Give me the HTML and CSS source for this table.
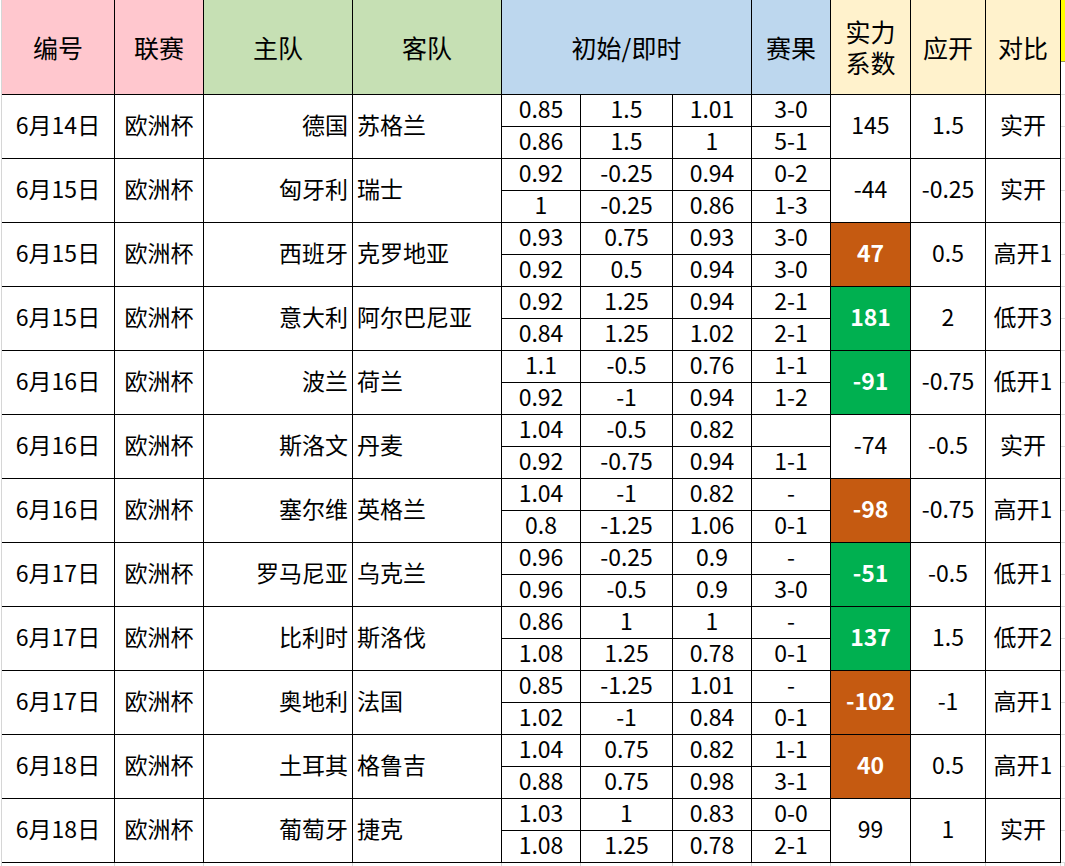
FILE: index.html
```html
<!DOCTYPE html>
<html lang="zh-CN">
<head>
<meta charset="utf-8">
<title>欧洲杯</title>
<link rel="stylesheet" href="styles.css">
</head>
<body>
<div class="sheet">
  <div class="c h pink">编号</div>
  <div class="c h pink">联赛</div>
  <div class="c h lgreen">主队</div>
  <div class="c h lgreen">客队</div>
  <div class="c h blue span3">初始/即时</div>
  <div class="c h blue">赛果</div>
  <div class="c h yellow two"><span class="ln">实力</span><span class="ln">系数</span></div>
  <div class="c h yellow">应开</div>
  <div class="c h yellow">对比</div>
  <div class="edge edge-h"></div>

  <div class="c s2">6月14日</div><div class="c s2">欧洲杯</div><div class="c s2 r">德国</div><div class="c s2 l">苏格兰</div>
  <div class="c">0.85</div><div class="c">1.5</div><div class="c">1.01</div><div class="c">3-0</div>
  <div class="c s2">145</div><div class="c s2">1.5</div><div class="c s2">实开</div><div class="edge"></div>
  <div class="c">0.86</div><div class="c">1.5</div><div class="c">1</div><div class="c">5-1</div><div class="edge"></div>

  <div class="c s2">6月15日</div><div class="c s2">欧洲杯</div><div class="c s2 r">匈牙利</div><div class="c s2 l">瑞士</div>
  <div class="c">0.92</div><div class="c">-0.25</div><div class="c">0.94</div><div class="c">0-2</div>
  <div class="c s2">-44</div><div class="c s2">-0.25</div><div class="c s2">实开</div><div class="edge"></div>
  <div class="c">1</div><div class="c">-0.25</div><div class="c">0.86</div><div class="c">1-3</div><div class="edge"></div>

  <div class="c s2">6月15日</div><div class="c s2">欧洲杯</div><div class="c s2 r">西班牙</div><div class="c s2 l">克罗地亚</div>
  <div class="c">0.93</div><div class="c">0.75</div><div class="c">0.93</div><div class="c">3-0</div>
  <div class="c s2 up">47</div><div class="c s2">0.5</div><div class="c s2">高开1</div><div class="edge"></div>
  <div class="c">0.92</div><div class="c">0.5</div><div class="c">0.94</div><div class="c">3-0</div><div class="edge"></div>

  <div class="c s2">6月15日</div><div class="c s2">欧洲杯</div><div class="c s2 r">意大利</div><div class="c s2 l">阿尔巴尼亚</div>
  <div class="c">0.92</div><div class="c">1.25</div><div class="c">0.94</div><div class="c">2-1</div>
  <div class="c s2 down">181</div><div class="c s2">2</div><div class="c s2">低开3</div><div class="edge"></div>
  <div class="c">0.84</div><div class="c">1.25</div><div class="c">1.02</div><div class="c">2-1</div><div class="edge"></div>

  <div class="c s2">6月16日</div><div class="c s2">欧洲杯</div><div class="c s2 r">波兰</div><div class="c s2 l">荷兰</div>
  <div class="c">1.1</div><div class="c">-0.5</div><div class="c">0.76</div><div class="c">1-1</div>
  <div class="c s2 down">-91</div><div class="c s2">-0.75</div><div class="c s2">低开1</div><div class="edge"></div>
  <div class="c">0.92</div><div class="c">-1</div><div class="c">0.94</div><div class="c">1-2</div><div class="edge"></div>

  <div class="c s2">6月16日</div><div class="c s2">欧洲杯</div><div class="c s2 r">斯洛文</div><div class="c s2 l">丹麦</div>
  <div class="c">1.04</div><div class="c">-0.5</div><div class="c">0.82</div><div class="c"></div>
  <div class="c s2">-74</div><div class="c s2">-0.5</div><div class="c s2">实开</div><div class="edge"></div>
  <div class="c">0.92</div><div class="c">-0.75</div><div class="c">0.94</div><div class="c">1-1</div><div class="edge"></div>

  <div class="c s2">6月16日</div><div class="c s2">欧洲杯</div><div class="c s2 r">塞尔维</div><div class="c s2 l">英格兰</div>
  <div class="c">1.04</div><div class="c">-1</div><div class="c">0.82</div><div class="c">-</div>
  <div class="c s2 up">-98</div><div class="c s2">-0.75</div><div class="c s2">高开1</div><div class="edge"></div>
  <div class="c">0.8</div><div class="c">-1.25</div><div class="c">1.06</div><div class="c">0-1</div><div class="edge"></div>

  <div class="c s2">6月17日</div><div class="c s2">欧洲杯</div><div class="c s2 r">罗马尼亚</div><div class="c s2 l">乌克兰</div>
  <div class="c">0.96</div><div class="c">-0.25</div><div class="c">0.9</div><div class="c">-</div>
  <div class="c s2 down">-51</div><div class="c s2">-0.5</div><div class="c s2">低开1</div><div class="edge"></div>
  <div class="c">0.96</div><div class="c">-0.5</div><div class="c">0.9</div><div class="c">3-0</div><div class="edge"></div>

  <div class="c s2">6月17日</div><div class="c s2">欧洲杯</div><div class="c s2 r">比利时</div><div class="c s2 l">斯洛伐</div>
  <div class="c">0.86</div><div class="c">1</div><div class="c">1</div><div class="c">-</div>
  <div class="c s2 down">137</div><div class="c s2">1.5</div><div class="c s2">低开2</div><div class="edge"></div>
  <div class="c">1.08</div><div class="c">1.25</div><div class="c">0.78</div><div class="c">0-1</div><div class="edge"></div>

  <div class="c s2">6月17日</div><div class="c s2">欧洲杯</div><div class="c s2 r">奥地利</div><div class="c s2 l">法国</div>
  <div class="c">0.85</div><div class="c">-1.25</div><div class="c">1.01</div><div class="c">-</div>
  <div class="c s2 up">-102</div><div class="c s2">-1</div><div class="c s2">高开1</div><div class="edge"></div>
  <div class="c">1.02</div><div class="c">-1</div><div class="c">0.84</div><div class="c">0-1</div><div class="edge"></div>

  <div class="c s2">6月18日</div><div class="c s2">欧洲杯</div><div class="c s2 r">土耳其</div><div class="c s2 l">格鲁吉</div>
  <div class="c">1.04</div><div class="c">0.75</div><div class="c">0.82</div><div class="c">1-1</div>
  <div class="c s2 up">40</div><div class="c s2">0.5</div><div class="c s2">高开1</div><div class="edge"></div>
  <div class="c">0.88</div><div class="c">0.75</div><div class="c">0.98</div><div class="c">3-1</div><div class="edge"></div>

  <div class="c s2">6月18日</div><div class="c s2">欧洲杯</div><div class="c s2 r">葡萄牙</div><div class="c s2 l">捷克</div>
  <div class="c">1.03</div><div class="c">1</div><div class="c">0.83</div><div class="c">0-0</div>
  <div class="c s2">99</div><div class="c s2">1</div><div class="c s2">实开</div><div class="edge"></div>
  <div class="c">1.08</div><div class="c">1.25</div><div class="c">0.78</div><div class="c">2-1</div><div class="edge"></div>

  <div class="fill"></div><div class="fill"></div><div class="fill"></div><div class="fill"></div>
  <div class="fill"></div><div class="fill"></div><div class="fill"></div><div class="fill"></div>
  <div class="fill"></div><div class="fill"></div><div class="fill"></div><div class="fill"></div>
</div>
</body>
</html>
```
FILE: styles.css
```css
html, body {
  margin: 0;
  padding: 0;
  background: #ffffff;
}

body {
  font-family: "Noto Sans CJK SC", "Noto Sans", sans-serif;
  color: #000000;
  overflow: hidden;
}

.sheet {
  display: grid;
  grid-template-columns: 113px 89px 149px 149px 79px 92px 79px 79px 80px 75px 75px 4px;
  grid-template-rows: 95px repeat(24, 32px) 4px;
  margin-left: 1px;
  border-left: 1px solid #d6d6d6;
  width: max-content;
}

.c {
  box-sizing: border-box;
  border-right: 1px solid #000000;
  border-bottom: 1px solid #000000;
  display: flex;
  align-items: center;
  justify-content: center;
  font-size: 23px;
  line-height: 1;
  white-space: nowrap;
  padding-bottom: 5px;
}

.s2 {
  grid-row: span 2;
}

.span3 {
  grid-column: span 3;
}

.r {
  justify-content: flex-end;
  padding-right: 4px;
}

.l {
  justify-content: flex-start;
  padding-left: 4px;
}

.h {
  font-size: 25px;
  padding-bottom: 0;
}

.two {
  flex-direction: column;
  gap: 6px;
}

.ln {
  display: block;
  line-height: 1;
}

.pink {
  background: #ffc7ce;
}

.lgreen {
  background: #c6e0b4;
}

.blue {
  background: #bdd7ee;
}

.yellow {
  background: #fff2cc;
}

.up {
  background: #c55a11;
  color: #ffffff;
  font-weight: bold;
}

.down {
  background: #00b050;
  color: #ffffff;
  font-weight: bold;
}

.edge {
  box-sizing: border-box;
  border-bottom: 1px solid #dcdcdc;
}

.edge-h {
  background: linear-gradient(#ffff00 0, #ffff00 61px, #9a9a5a 61px, #9a9a5a 62px, transparent 62px);
}

.fill {
  box-sizing: border-box;
  border-right: 1px solid #d6d6d6;
}
```
